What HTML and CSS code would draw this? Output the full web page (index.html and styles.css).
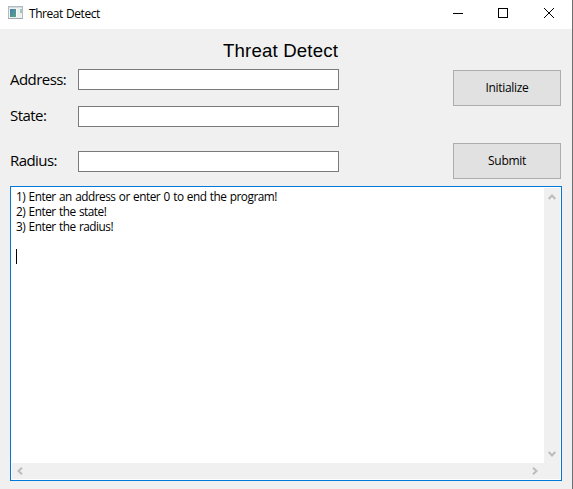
FILE: index.html
```html
<!DOCTYPE html>
<html lang="en">
<head>
<meta charset="utf-8">
<title>Threat Detect</title>
<link rel="stylesheet" href="styles.css">
</head>
<body>
<div class="window">
  <header class="titlebar">
    <svg class="app-icon" width="16" height="14" viewBox="0 0 16 14">
      <defs><linearGradient id="pane" x1="0" y1="0" x2="1" y2="1"><stop offset="0" stop-color="#477fae"/><stop offset="1" stop-color="#58a582"/></linearGradient></defs>
      <rect x=".5" y=".5" width="14" height="12" fill="#eef1f2" stroke="#b3bbbe"/>
      <path d="M1 1.5h13" stroke="#d3dadd"/>
      <rect x="2" y="3" width="6" height="8" fill="url(#pane)"/>
      <path d="M8.500 3v8" stroke="#fff"/>
      <rect x="12" y="3" width="2" height="4" fill="#9fc8bc"/>
      <path d="M0 12.5h15" stroke="#a0a9ac"/>
    </svg>
    <span class="caption">Threat Detect</span>
    <svg class="controls" width="104" height="12" viewBox="0 0 104 12" fill="none" stroke="#000" shape-rendering="crispEdges">
      <path d="M0 5.5h10"/><rect x="45.500" y=".5" width="9" height="9"/>
      <path d="M91 0l10 10M101 0l-10 10" shape-rendering="auto"/>
    </svg>
  </header>
  <main class="content">
    <h1 class="heading">Threat Detect</h1>
    <form class="form">
      <label class="address" for="address">Address:</label>
      <input id="address" type="text">
      <button class="initialize" type="button"><span>Initialize</span></button>
      <label class="state" for="state">State:</label>
      <input id="state" type="text">
      <label class="radius" for="radius">Radius:</label>
      <input id="radius" type="text">
      <button class="submit" type="button"><span>Submit</span></button>
    </form>
    <section class="console">
      <div class="output">
        <p>1) Enter an address or enter 0 to end the program!</p>
        <p>2) Enter the state!</p>
        <p>3) Enter the radius!</p>
        <div class="caret"></div>
      </div>
      <div class="vbar">
        <svg width="8" height="6" viewBox="0 0 8 6"><path d="M.7 5L4 1.500 7.300 5"/></svg>
        <svg width="8" height="6" viewBox="0 0 8 6"><path d="M.7 1L4 4.500 7.300 1"/></svg>
      </div>
      <div class="hbar">
        <svg width="6" height="8" viewBox="0 0 6 8"><path d="M5 .7L1.500 4 5 7.300"/></svg>
        <svg width="6" height="8" viewBox="0 0 6 8"><path d="M1 .7L4.500 4 1 7.300"/></svg>
      </div>
    </section>
  </main>
</div>
</body>
</html>
```
FILE: styles.css
```css
* { box-sizing: border-box; }
body { margin: 0; overflow: hidden; color: #000; font-family: "Open Sans", "Noto Sans", sans-serif; }
.window { width: 573px; height: 489px; background: #f0f0f0; border-right: 1px solid #6e6e6e; }
.titlebar { display: flex; height: 29px; padding: 0 18px 0 8px; background: #fff; }
.app-icon { margin-top: 6px; }
.caption { margin: 5px auto 0 5px; font-size: 12px; line-height: 17px; letter-spacing: -.45px; word-spacing: .5px; white-space: nowrap; }
.controls { margin-top: 8px; margin-right: -3px; }
.content { padding: 10px 10px 0; }
.heading { margin: 0; height: 30px; padding-left: 213px; font: 400 18.67px/24px "Liberation Sans", sans-serif; letter-spacing: .15px; white-space: nowrap; }
.form { display: grid; grid-template-columns: 68px 261px 108px; grid-template-rows: 37px 37px 43px; align-items: start; height: 117px; }
label { grid-column: 1; font-size: 15px; line-height: 20px; letter-spacing: -.55px; white-space: nowrap; }
input { grid-column: 2; width: 261px; height: 21px; margin: 0; padding: 0 3px; border: 1px solid #7a7a7a; background: #fff; outline: 0; }
.state, #state { grid-row: 2; }
.state { margin-top: -1px; }
.radius, #radius { grid-row: 3; }
#radius { margin-top: 8px; }
.radius { margin-top: 7px; }
button { grid-column: 3; width: 108px; height: 36px; margin: 1px 0 0 114px; padding: 0; border: 1px solid #adadad; background: #e1e1e1; color: #000; font: 12px/16px "Open Sans", sans-serif; letter-spacing: -.3px; }
.initialize { grid-row: 1; }
.submit { grid-row: 3; margin-top: 0; }
.console { display: grid; grid-template: 275px 16px / 532px 16px; width: 552px; height: 295px; padding: 1px; border: 1px solid #0078d7; background: #fff; }
.output { padding: 1px 4px; font-size: 11.8px; line-height: 15px; white-space: nowrap; }
.output p { margin: 0; letter-spacing: -.49px; word-spacing: .8px; }
.caret { width: 1px; height: 15px; margin-top: 15px; background: #000; }
.vbar, .hbar { display: flex; align-items: center; justify-content: space-between; background: #f0f0f0; }
.vbar { flex-direction: column; padding: 6px 0; }
.hbar { grid-column: 1 / 3; padding: 0 22px 0 5px; }
.vbar path, .hbar path { fill: none; stroke: #bcbcbc; stroke-width: 2; }
```
